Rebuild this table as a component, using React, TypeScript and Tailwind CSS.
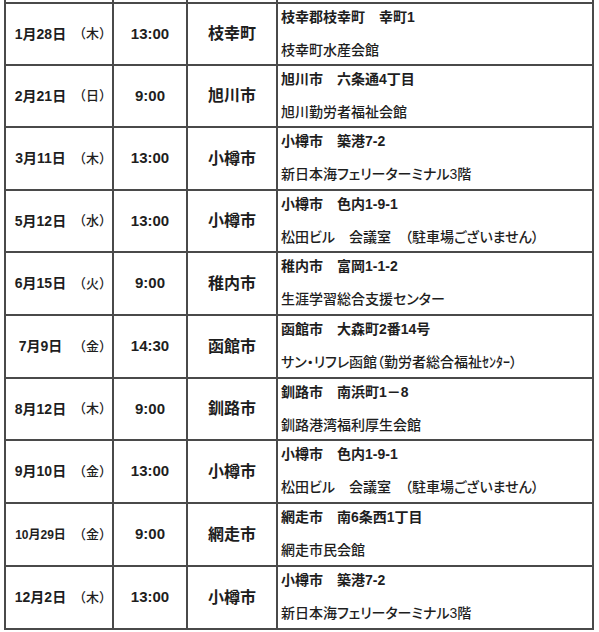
const rows = [
  { date: '1月28日', wd: '木', time: '13:00', city: '枝幸町', a1: '枝幸郡枝幸町　幸町1', a2: '枝幸町水産会館', h: 'h-[62px]' },
  { date: '2月21日', wd: '日', time: '9:00', city: '旭川市', a1: '旭川市　六条通4丁目', a2: '旭川勤労者福祉会館', h: 'h-[62px]' },
  { date: '3月11日', wd: '木', time: '13:00', city: '小樽市', a1: '小樽市　築港7-2', a2: '新日本海フェリーターミナル3階', h: 'h-[63px]' },
  { date: '5月12日', wd: '水', time: '13:00', city: '小樽市', a1: '小樽市　色内1-9-1', a2: '松田ビル　会議室　（駐車場ございません）', h: 'h-[62px]' },
  { date: '6月15日', wd: '火', time: '9:00', city: '稚内市', a1: '稚内市　富岡1-1-2', a2: '生涯学習総合支援センター', h: 'h-[63px]' },
  { date: '7月9日', wd: '金', time: '14:30', city: '函館市', a1: '函館市　大森町2番14号', a2: 'サン・リフレ函館（勤労者総合福祉ｾﾝﾀｰ）', h: 'h-[63px]' },
  { date: '8月12日', wd: '木', time: '9:00', city: '釧路市', a1: '釧路市　南浜町1－8', a2: '釧路港湾福利厚生会館', h: 'h-[62px]' },
  { date: '9月10日', wd: '金', time: '13:00', city: '小樽市', a1: '小樽市　色内1-9-1', a2: '松田ビル　会議室　（駐車場ございません）', h: 'h-[63px]' },
  { date: '10月29日', wd: '金', time: '9:00', city: '網走市', a1: '網走市　南6条西1丁目', a2: '網走市民会館', h: 'h-[63px]', small: true },
  { date: '12月2日', wd: '木', time: '13:00', city: '小樽市', a1: '小樽市　築港7-2', a2: '新日本海フェリーターミナル3階', h: 'h-[63px]' },
];

const font = "font-['Liberation_Sans','Noto_Sans_CJK_JP',sans-serif] [font-feature-settings:'palt']";

export default function App() {
  return (
    <div className={`w-[599px] h-[632px] bg-white pl-[4px] text-[#1e1e1e] ${font}`}>
      {/* cut-off top of the table: only the column lines show */}
      <div className="flex h-[2px] w-[590px] border-l-2 border-[#4a4a4a]">
        <div className="w-[108px] border-r-2 border-[#4a4a4a]" />
        <div className="w-[74px] border-r-2 border-[#4a4a4a]" />
        <div className="w-[90px] border-r-2 border-[#4a4a4a]" />
        <div className="w-[316px] border-r-2 border-[#4a4a4a]" />
      </div>
      <div className="w-[590px] border-l-2 border-t-2 border-[#4a4a4a]">
        {rows.map((r, i) => (
          <div key={i} className={`flex ${r.h} border-b-2 border-[#4a4a4a]`}>
            <div className="flex w-[108px] items-center border-r-2 border-[#4a4a4a]">
              <span className={`w-[74px] text-center font-bold ${r.small ? 'text-[12px]' : 'text-[14px]'}`}>
                {r.date}
              </span>
              <span className="-ml-[2px] whitespace-nowrap text-[13px] font-medium [font-feature-settings:normal]">
                （{r.wd}）
              </span>
            </div>
            <div className="flex w-[74px] items-center justify-center border-r-2 border-[#4a4a4a] text-[15px] font-bold">
              {r.time}
            </div>
            <div className="flex w-[90px] items-center justify-center border-r-2 border-[#4a4a4a] text-[16px] font-bold">
              {r.city}
            </div>
            <div className="flex w-[316px] flex-col border-r-2 border-[#4a4a4a] pl-[3px] pt-[3px] text-[14px] leading-[20px]">
              <span className="whitespace-nowrap font-bold">{r.a1}</span>
              <span className="mt-[13px] whitespace-nowrap font-medium">{r.a2}</span>
            </div>
          </div>
        ))}
      </div>
    </div>
  );
}
